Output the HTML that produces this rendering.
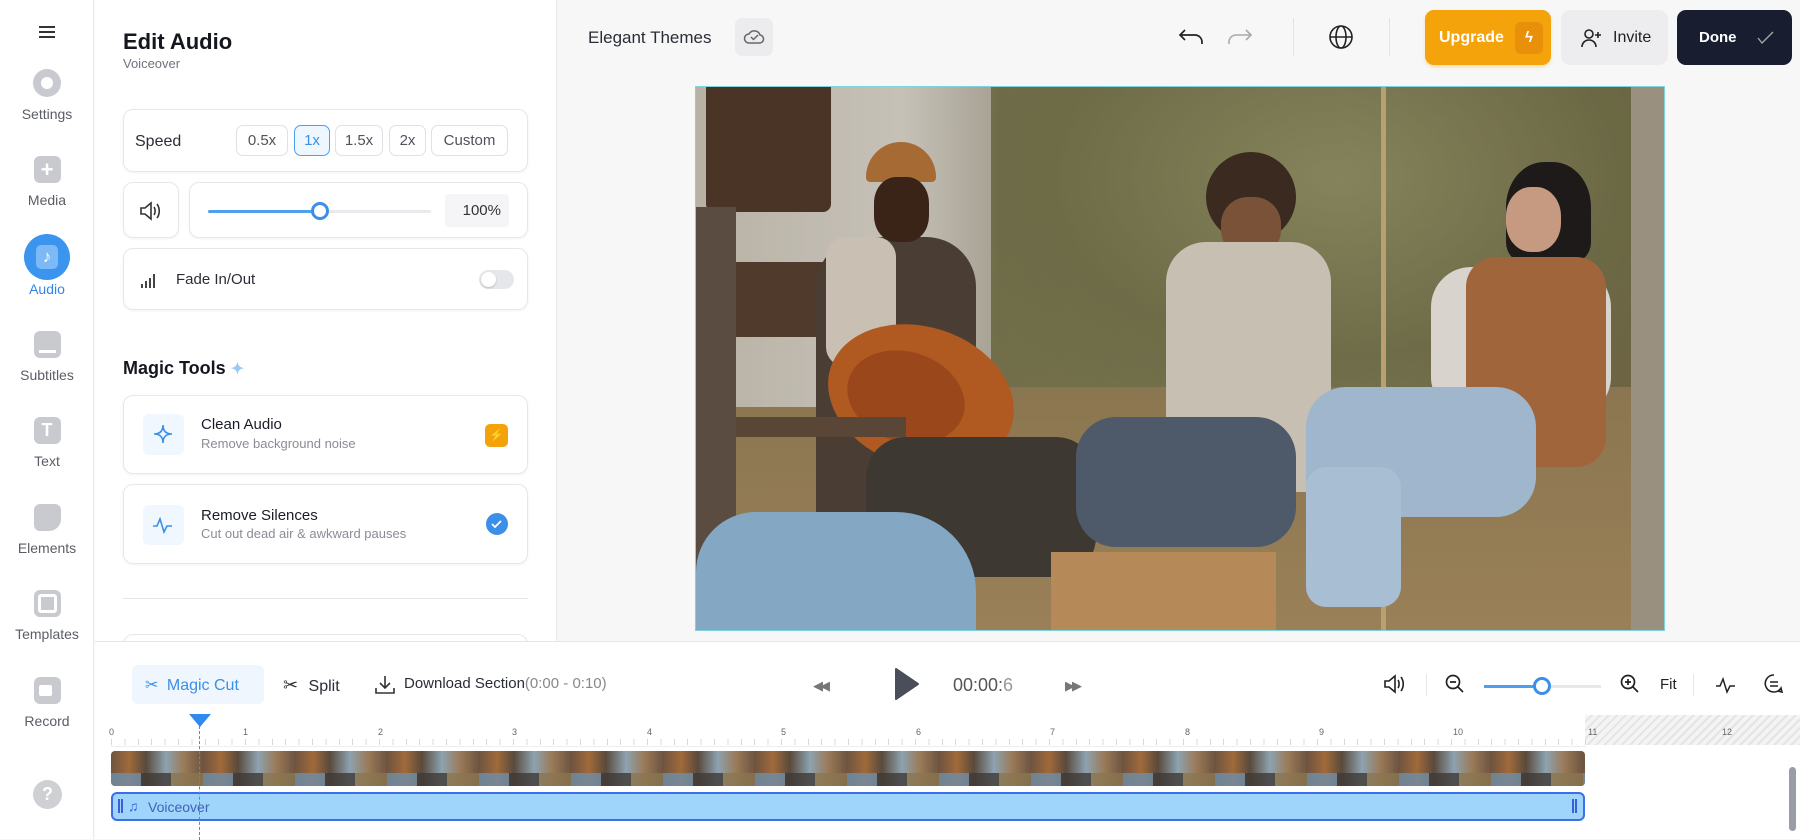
<!DOCTYPE html>
<html><head><meta charset="utf-8"><style>
*{box-sizing:border-box;margin:0;padding:0}
body{width:1800px;height:839px;overflow:hidden;font-family:"Liberation Sans",sans-serif;background:#f7f7f8;position:relative;color:#1a1d29}
.abs{position:absolute}
.rail{left:0;top:0;width:94px;height:839px;background:#fff;border-right:1px solid #ececec}
.ri{position:absolute;left:0;width:94px;text-align:center;font-size:14px;color:#5a5d66}
.ri .ic{width:27px;height:27px;margin:0 auto 9px;border-radius:6px;background:#c9cacf}
.panel{left:95px;top:0;width:462px;height:641px;background:#fff;border-right:1px solid #e8e8e8}
.card{position:absolute;background:#fff;border:1px solid #e6e7ea;border-radius:10px;box-shadow:0 1px 3px rgba(0,0,0,.05)}
.pill{position:absolute;top:15px;height:31px;border:1px solid #e0e1e5;border-radius:7px;font-size:15px;color:#50535c;text-align:center;line-height:29px}
.main{left:557px;top:0;width:1243px;height:641px;background:#f7f7f8}
.btn{position:absolute;top:10px;height:55px;border-radius:9px;font-size:16px;font-weight:bold;line-height:55px}
.tl{left:95px;top:641px;width:1705px;height:198px;background:#fff;border-top:1px solid #e6e6e6}
.tool{position:absolute;top:33px;font-size:16px;color:#2a2d36}
</style></head><body>

<div class="abs rail">
  <div class="abs" style="left:39px;top:26px;width:16px;height:2px;background:#333;box-shadow:0 5px 0 #333,0 10px 0 #333"></div>
  <div class="ri" style="top:69px"><div class="ic" style="border-radius:50%;width:28px;height:28px;background:#c9cacf;position:relative"><div style="position:absolute;left:8px;top:8px;width:12px;height:12px;border-radius:50%;background:#fff"></div></div>Settings</div>
  <div class="ri" style="top:156px"><div class="ic" style="position:relative;color:#fff;font-size:22px;line-height:27px;font-weight:bold">+</div>Media</div>
  <div class="abs" style="left:24px;top:234px;width:46px;height:46px;border-radius:50%;background:#3b95ef"><div style="position:absolute;left:12px;top:11px;width:22px;height:24px;border-radius:5px;background:#7cb9f6;color:#fff;font-size:17px;text-align:center;line-height:24px;font-weight:bold">♪</div></div>
  <div class="ri" style="top:281px;color:#2f86e8">Audio</div>
  <div class="ri" style="top:331px"><div class="ic" style="position:relative"><div style="position:absolute;left:5px;bottom:5px;width:17px;height:3px;background:#fff"></div></div>Subtitles</div>
  <div class="ri" style="top:417px"><div class="ic" style="color:#fff;font-weight:bold;font-size:18px;line-height:27px">T</div>Text</div>
  <div class="ri" style="top:504px"><div class="ic" style="border-bottom-right-radius:12px"></div>Elements</div>
  <div class="ri" style="top:590px"><div class="ic" style="position:relative"><div style="position:absolute;left:4px;top:4px;width:19px;height:19px;border:3px solid #fff;border-radius:3px;background:#c9cacf"></div></div>Templates</div>
  <div class="ri" style="top:677px"><div class="ic" style="position:relative"><div style="position:absolute;left:5px;top:8px;width:13px;height:11px;background:#fff;border-radius:2px"></div></div>Record</div>
  <div class="abs" style="left:33px;top:780px;width:29px;height:29px;border-radius:50%;background:#cfd0d4;color:#fff;font-weight:bold;font-size:18px;text-align:center;line-height:29px">?</div>
</div>

<div class="abs panel">
  <div class="abs" style="left:28px;top:29px;font-size:22px;font-weight:bold;color:#15171f">Edit Audio</div>
  <div class="abs" style="left:28px;top:56px;font-size:13px;color:#70737c">Voiceover</div>
  <div class="card" style="left:28px;top:109px;width:405px;height:63px">
    <div class="abs" style="left:11px;top:23px;font-size:16px;color:#2a2d36">Speed</div>
    <div class="pill" style="left:112px;width:52px">0.5x</div>
    <div class="pill" style="left:170px;width:36px;border-color:#4f9ff0;background:#eef6ff;color:#3a8fe8">1x</div>
    <div class="pill" style="left:211px;width:48px">1.5x</div>
    <div class="pill" style="left:265px;width:37px">2x</div>
    <div class="pill" style="left:307px;width:77px">Custom</div>
  </div>
  <div class="card" style="left:28px;top:182px;width:56px;height:56px">
    <svg class="abs" style="left:15px;top:17px" width="26" height="22" viewBox="0 0 26 22" fill="none" stroke="#333" stroke-width="1.6"><path d="M2 8h4l6-5v16l-6-5H2z"/><path d="M15 7c1.5 2 1.5 6 0 8M18 4c3 4 3 10 0 14"/></svg>
  </div>
  <div class="card" style="left:94px;top:182px;width:339px;height:56px">
    <div class="abs" style="left:18px;top:27px;width:223px;height:3px;background:#e9eaee;border-radius:2px"></div>
    <div class="abs" style="left:18px;top:27px;width:112px;height:3px;background:#4f9ff0;border-radius:2px"></div>
    <div class="abs" style="left:121px;top:19px;width:18px;height:18px;border-radius:50%;border:3px solid #3b8fe8;background:#fff"></div>
    <div class="abs" style="left:255px;top:11px;width:64px;height:33px;background:#f5f5f7;border-radius:4px;font-size:15px;text-align:right;line-height:33px;padding-right:8px;color:#333">100%</div>
  </div>
  <div class="card" style="left:28px;top:248px;width:405px;height:62px">
    <svg class="abs" style="left:16px;top:24px" width="18" height="16"><rect x="1" y="11" width="2" height="4" fill="#444"/><rect x="5" y="8" width="2" height="7" fill="#444"/><rect x="9" y="5" width="2" height="10" fill="#444"/><rect x="13" y="1" width="2" height="14" fill="#444"/></svg>
    <div class="abs" style="left:52px;top:22px;font-size:15px;color:#2a2d36">Fade In/Out</div>
    <div class="abs" style="left:355px;top:21px;width:35px;height:19px;border-radius:10px;background:#e6e7ea"><div style="position:absolute;left:2px;top:2px;width:15px;height:15px;border-radius:50%;background:#fff;box-shadow:0 1px 2px rgba(0,0,0,.2)"></div></div>
  </div>
  <div class="abs" style="left:28px;top:358px;font-size:18px;font-weight:bold;color:#15171f">Magic Tools <span style="color:#9cc8f4;font-size:16px">✦</span></div>
  <div class="card" style="left:28px;top:395px;width:405px;height:79px">
    <div class="abs" style="left:19px;top:18px;width:41px;height:41px;background:#f1f7fe;border-radius:6px"><svg style="position:absolute;left:10px;top:10px" width="20" height="20" viewBox="0 0 20 20" fill="none" stroke="#3a8fe8" stroke-width="1.6"><path d="M10 1C10 7 13 10 19 10C13 10 10 13 10 19C10 13 7 10 1 10C7 10 10 7 10 1Z"/></svg></div>
    <div class="abs" style="left:77px;top:20px;font-size:15px;color:#1a1d29">Clean Audio</div>
    <div class="abs" style="left:77px;top:40px;font-size:13px;color:#8a8d96">Remove background noise</div>
    <div class="abs" style="left:361px;top:28px;width:23px;height:23px;border-radius:5px;background:#f4a20c;color:#fff;font-size:12px;text-align:center;line-height:23px">⚡</div>
  </div>
  <div class="card" style="left:28px;top:484px;width:405px;height:80px">
    <div class="abs" style="left:19px;top:20px;width:41px;height:40px;background:#f1f7fe;border-radius:6px"><svg style="position:absolute;left:9px;top:10px" width="22" height="20" fill="none" stroke="#3a8fe8" stroke-width="1.6"><path d="M1 11h4l3-7 4 13 3-6h5"/></svg></div>
    <div class="abs" style="left:77px;top:22px;font-size:15px;color:#1a1d29">Remove Silences</div>
    <div class="abs" style="left:77px;top:41px;font-size:13px;color:#8a8d96">Cut out dead air &amp; awkward pauses</div>
    <div class="abs" style="left:362px;top:28px;width:22px;height:22px;border-radius:50%;background:#3a8fe8"><svg style="position:absolute;left:5px;top:6px" width="12" height="10" fill="none" stroke="#fff" stroke-width="1.8"><path d="M1 5l3 3 6-6"/></svg></div>
  </div>
  <div class="abs" style="left:28px;top:598px;width:405px;height:1px;background:#e6e7ea"></div>
  <div class="abs" style="left:28px;top:634px;width:405px;height:10px;border:1px solid #e6e7ea;border-radius:10px 10px 0 0"></div>
</div>

<div class="abs main">
  <div class="abs" style="left:31px;top:28px;font-size:17px;color:#2a2d36">Elegant Themes</div>
  <div class="abs" style="left:178px;top:18px;width:38px;height:38px;background:#ececef;border-radius:7px"><svg style="position:absolute;left:8px;top:10px" width="22" height="17" fill="none" stroke="#666" stroke-width="1.5"><path d="M6 15h10a4 4 0 0 0 1-8 6 6 0 0 0-11-1 4.5 4.5 0 0 0 0 9z"/><path d="M8 9l2.5 2.5L15 7"/></svg></div>
  <svg class="abs" style="left:621px;top:28px" width="28" height="18" fill="none" stroke="#222" stroke-width="1.7"><path d="M7 2L2 7l5 5M2 7h15a7 7 0 0 1 7 7v2"/></svg>
  <svg class="abs" style="left:668px;top:28px" width="28" height="18" fill="none" stroke="#aaa" stroke-width="1.6"><path d="M21 2l5 5-5 5M26 7H11a7 7 0 0 0-7 7v2"/></svg>
  <div class="abs" style="left:736px;top:18px;width:1px;height:38px;background:#e3e3e6"></div>
  <svg class="abs" style="left:771px;top:24px" width="26" height="26" fill="none" stroke="#222" stroke-width="1.6"><circle cx="13" cy="13" r="11"/><ellipse cx="13" cy="13" rx="5" ry="11"/><path d="M2 13h22"/></svg>
  <div class="abs" style="left:832px;top:18px;width:1px;height:38px;background:#e3e3e6"></div>
  <div class="btn" style="left:868px;width:126px;background:#f5a30a;color:#fff;padding-left:14px;box-shadow:0 2px 3px rgba(245,163,10,.3)">Upgrade<div style="position:absolute;right:8px;top:12px;width:28px;height:32px;background:#e8900a;border-radius:6px;text-align:center;line-height:32px;font-size:15px">ϟ</div></div>
  <div class="btn" style="left:1004px;width:107px;background:#ededf0;color:#222;font-weight:normal;padding-left:52px"><svg style="position:absolute;left:20px;top:18px" width="22" height="20" fill="none" stroke="#222" stroke-width="1.6"><circle cx="8" cy="6" r="4"/><path d="M1 19c0-4 3-7 7-7s7 3 7 7M17 4v6M14 7h6"/></svg>Invite</div>
  <div class="btn" style="left:1120px;width:115px;background:#181e30;color:#fff;padding-left:22px;font-size:15px">Done<svg style="position:absolute;left:80px;top:21px" width="17" height="13" fill="none" stroke="#aaa" stroke-width="1.3"><path d="M1 7l4 5 11-11"/></svg></div>

  <div class="abs" style="left:138px;top:86px;width:970px;height:545px;overflow:hidden;border:1px solid #7fd3dc;background:linear-gradient(90deg,#6d6446 0%,#74714c 40%,#7a7452 70%,#6b6040 100%)">
    <div class="abs" style="left:300px;top:0;width:680px;height:300px;background:radial-gradient(ellipse at 50% 30%,#8a8a5f 0,#6a6a45 60%,transparent 100%);opacity:.7"></div>
    <div class="abs" style="left:0;top:300px;width:980px;height:245px;background:linear-gradient(#8a7650,#9a8058)"></div>
    <div class="abs" style="left:0;top:0;width:295px;height:320px;background:linear-gradient(90deg,#b8b2a6,#c6c1b7 70%,#a9a396)"></div>
    <div class="abs" style="left:10px;top:0;width:125px;height:125px;background:#4a3425;border-radius:0 0 8px 8px"></div>
    <div class="abs" style="left:40px;top:175px;width:100px;height:75px;background:#4f3a2c"></div>
    <div class="abs" style="left:935px;top:0;width:35px;height:545px;background:#9a9080"></div>
    <div class="abs" style="left:685px;top:0;width:5px;height:545px;background:#b8a070"></div>
    <div class="abs" style="left:120px;top:150px;width:160px;height:340px;background:#4a3e34;border-radius:50px 50px 10px 10px"></div>
    <div class="abs" style="left:170px;top:55px;width:70px;height:40px;background:#a66b35;border-radius:40px 40px 5px 5px"></div>
    <div class="abs" style="left:178px;top:90px;width:55px;height:65px;background:#3a2418;border-radius:40%"></div>
    <div class="abs" style="left:130px;top:150px;width:70px;height:130px;background:#c9c0b3;border-radius:20px"></div>
    <div class="abs" style="left:130px;top:240px;width:190px;height:140px;background:#b05a22;border-radius:50%;transform:rotate(18deg)"></div>
    <div class="abs" style="left:150px;top:265px;width:120px;height:90px;background:#8a3a18;border-radius:50%;transform:rotate(18deg);opacity:.6"></div>
    <div class="abs" style="left:170px;top:350px;width:230px;height:140px;background:#3e3832;border-radius:40px"></div>
    <div class="abs" style="left:510px;top:65px;width:90px;height:90px;background:#3a2a20;border-radius:50%"></div>
    <div class="abs" style="left:525px;top:110px;width:60px;height:60px;background:#7a5238;border-radius:45%"></div>
    <div class="abs" style="left:470px;top:155px;width:165px;height:250px;background:#c7c0b2;border-radius:40px 40px 10px 10px"></div>
    <div class="abs" style="left:380px;top:330px;width:220px;height:130px;background:#4e5a6a;border-radius:40px"></div>
    <div class="abs" style="left:810px;top:75px;width:85px;height:100px;background:#1e1a1a;border-radius:45% 45% 20% 20%"></div>
    <div class="abs" style="left:810px;top:100px;width:55px;height:65px;background:#c69a80;border-radius:45%"></div>
    <div class="abs" style="left:735px;top:180px;width:180px;height:150px;background:#d8d3cc;border-radius:40px"></div>
    <div class="abs" style="left:770px;top:170px;width:140px;height:210px;background:#a0653a;border-radius:30px"></div>
    <div class="abs" style="left:610px;top:300px;width:230px;height:130px;background:#9fb6cd;border-radius:40px"></div>
    <div class="abs" style="left:610px;top:380px;width:95px;height:140px;background:#a8bed2;border-radius:20px"></div>
    <div class="abs" style="left:355px;top:465px;width:225px;height:80px;background:#b58a58"></div>
    <div class="abs" style="left:0;top:120px;width:40px;height:425px;background:#5a4c40"></div>
    <div class="abs" style="left:0;top:425px;width:280px;height:140px;background:#84a8c4;border-radius:60px 80px 0 0"></div>
    <div class="abs" style="left:40px;top:330px;width:170px;height:20px;background:#5a4636"></div>
  </div>
</div>

<div class="abs tl">
  <div class="abs" style="left:37px;top:23px;width:132px;height:39px;background:#f0f6fe;border-radius:6px"></div>
  <div class="tool" style="left:50px;color:#3a8fe8"><span style="font-size:16px">✂</span> <span style="margin-left:4px">Magic Cut</span></div>
  <div class="tool" style="left:188px"><span style="font-size:18px">✂</span> <span style="margin-left:6px">Split</span></div>
  <svg class="abs" style="left:280px;top:33px" width="20" height="20" fill="none" stroke="#333" stroke-width="1.6"><path d="M10 1v12M5 8l5 5 5-5M1 13v5h18v-5"/></svg>
  <div class="tool" style="left:309px;font-size:15px">Download Section<span style="color:#888">(0:00 - 0:10)</span></div>
  <div class="abs" style="left:718px;top:36px;font-size:13px;color:#777;letter-spacing:-3px">◀◀</div>
  <svg class="abs" style="left:799px;top:25px" width="26" height="34"><path d="M2 2l22 15L2 32z" fill="#4a4d5a" stroke="#4a4d5a" stroke-width="2" stroke-linejoin="round"/></svg>
  <div class="abs" style="left:858px;top:33px;font-size:18px;color:#555">00:00:<span style="color:#999">6</span></div>
  <div class="abs" style="left:970px;top:36px;font-size:13px;color:#777;letter-spacing:-3px">▶▶</div>
  <svg class="abs" style="left:1288px;top:31px" width="26" height="22" fill="none" stroke="#222" stroke-width="1.6"><path d="M2 8h4l6-5v16l-6-5H2z"/><path d="M15 7c1.5 2 1.5 6 0 8M18 4c3 4 3 10 0 14"/></svg>
  <div class="abs" style="left:1331px;top:32px;width:1px;height:22px;background:#e6e6e6"></div>
  <svg class="abs" style="left:1350px;top:32px" width="20" height="20" fill="none" stroke="#222" stroke-width="1.7"><circle cx="8" cy="8" r="6.5"/><path d="M5 8h6M13 13l5 5"/></svg>
  <div class="abs" style="left:1389px;top:43px;width:117px;height:3px;background:#e6e7ea"></div>
  <div class="abs" style="left:1389px;top:43px;width:50px;height:3px;background:#4f9ff0"></div>
  <div class="abs" style="left:1438px;top:35px;width:18px;height:18px;border-radius:50%;border:3px solid #3b8fe8;background:#fff"></div>
  <svg class="abs" style="left:1525px;top:32px" width="20" height="20" fill="none" stroke="#222" stroke-width="1.7"><circle cx="8" cy="8" r="6.5"/><path d="M5 8h6M8 5v6M13 13l5 5"/></svg>
  <div class="abs" style="left:1565px;top:34px;font-size:15px;color:#222">Fit</div>
  <div class="abs" style="left:1598px;top:32px;width:1px;height:22px;background:#e6e6e6"></div>
  <svg class="abs" style="left:1620px;top:33px" width="22" height="20" fill="none" stroke="#222" stroke-width="1.5"><path d="M1 11h4l3-7 4 13 3-6h5"/></svg>
  <svg class="abs" style="left:1669px;top:32px" width="20" height="20" fill="none" stroke="#222" stroke-width="1.6"><path d="M10 1a8.5 8.5 0 1 0 7 13l1 4-4-1"/><path d="M6 8h8M6 12h8"/></svg>

  <div class="abs" style="left:1490px;top:73px;width:215px;height:30px;background:repeating-linear-gradient(135deg,#f4f4f4 0 4px,#e4e4e4 4px 6px)"></div>
  <div class="abs" style="left:16px;top:97px;width:1475px;height:6px;background:repeating-linear-gradient(90deg,#d8d8d8 0 1px,transparent 1px 13.4px)"></div>
  <div class="abs" style="left:16px;top:104px;width:1475px;height:1px;background:#eee"></div>
  <div style="position:absolute;left:14px;top:85px;font-size:9px;color:#666">
    <span class="abs" style="left:0">0</span><span class="abs" style="left:134px">1</span><span class="abs" style="left:269px">2</span><span class="abs" style="left:403px">3</span><span class="abs" style="left:538px">4</span><span class="abs" style="left:672px">5</span><span class="abs" style="left:807px">6</span><span class="abs" style="left:941px">7</span><span class="abs" style="left:1076px">8</span><span class="abs" style="left:1210px">9</span><span class="abs" style="left:1344px">10</span><span class="abs" style="left:1479px">11</span><span class="abs" style="left:1613px">12</span>
  </div>
  <div class="abs" style="left:16px;top:109px;width:1474px;height:35px;border-radius:4px;background:repeating-linear-gradient(90deg,#6e5440 0,#a06a3a 18px,#5a4a3c 35px,#8da2b0 55px,#9a7a58 73px,#6e5440 92px);overflow:hidden"><div style="position:absolute;left:0;top:22px;width:100%;height:13px;background:repeating-linear-gradient(90deg,#6f8ea8 0 30px,#3e3a36 30px 60px,#8a7650 60px 92px);opacity:.8"></div></div>
  <div class="abs" style="left:16px;top:150px;width:1474px;height:29px;border:2px solid #3b6ee8;border-radius:6px;background:#9fd4fb"><div style="position:absolute;left:5px;top:5px;width:5px;height:14px;border-left:2px solid #3b5fd8;border-right:2px solid #3b5fd8"></div><span style="position:absolute;left:15px;top:4px;font-size:14px;color:#3b5fd8">♫</span><span style="position:absolute;left:35px;top:5px;font-size:14px;color:#3e63b8">Voiceover</span><div style="position:absolute;right:6px;top:5px;width:5px;height:14px;border-left:2px solid #3b5fd8;border-right:2px solid #3b5fd8"></div></div>
  <div class="abs" style="left:94px;top:72px;width:0;height:0;border-left:11px solid transparent;border-right:11px solid transparent;border-top:13px solid #2f8aee"></div>
  <div class="abs" style="left:104px;top:84px;width:0;height:114px;border-left:1px dashed #3a8fe8"></div>
  <div class="abs" style="left:1694px;top:125px;width:7px;height:64px;background:#9a9ca6;border-radius:4px"></div>
</div>
</body></html>
